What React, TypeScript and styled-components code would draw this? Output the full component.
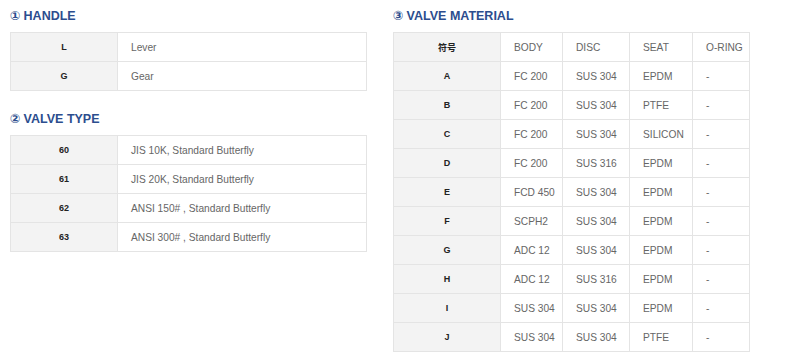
import React from "react";
import styled, { createGlobalStyle } from "styled-components";

const Global = createGlobalStyle`
  html, body { margin: 0; padding: 0; background: #ffffff; }
  body { font-family: "Liberation Sans", Arial, "Noto Sans CJK KR", sans-serif; }
`;

const Page = styled.div`
  display: flex;
  align-items: flex-start;
  gap: 26px;
  padding-left: 10px;
  width: 800px;
  height: 355px;
  overflow: hidden;
  box-sizing: border-box;
`;

const Column = styled.div<{ $w: number }>`
  width: ${(p) => p.$w}px;
  flex: none;
  display: flex;
  flex-direction: column;
`;

const Heading = styled.h2<{ $mt?: number }>`
  margin: ${(p) => p.$mt ?? 0}px 0 0 0;
  height: 32px;
  line-height: 32px;
  font-size: 12.5px;
  font-weight: bold;
  color: #2c4d8e;
  white-space: nowrap;
`;

const Circle = styled.span`
  font-family: "DejaVu Sans", sans-serif;
  font-weight: bold;
  font-size: 12.5px;
  margin-right: 3px;
`;

const Table = styled.table`
  border-collapse: collapse;
  table-layout: fixed;
  width: 100%;
`;

const Cell = styled.td`
  border: 1px solid #e4e4e4;
  height: 28px;
  padding: 0 0 0 13px;
  font-size: 10.2px;
  color: #666666;
  white-space: nowrap;
  overflow: hidden;
`;

const KeyCell = styled.td`
  border: 1px solid #e4e4e4;
  background: #f3f3f3;
  height: 28px;
  padding: 0;
  text-align: center;
  font-size: 9px;
  font-weight: bold;
  color: #222222;
`;

const handle = [
  ["L", "Lever"],
  ["G", "Gear"],
];

const types = [
  ["60", "JIS 10K, Standard Butterfly"],
  ["61", "JIS 20K, Standard Butterfly"],
  ["62", "ANSI 150# , Standard Butterfly"],
  ["63", "ANSI 300# , Standard Butterfly"],
];

const materials = [
  ["A", "FC 200", "SUS 304", "EPDM", "-"],
  ["B", "FC 200", "SUS 304", "PTFE", "-"],
  ["C", "FC 200", "SUS 304", "SILICON", "-"],
  ["D", "FC 200", "SUS 316", "EPDM", "-"],
  ["E", "FCD 450", "SUS 304", "EPDM", "-"],
  ["F", "SCPH2", "SUS 304", "EPDM", "-"],
  ["G", "ADC 12", "SUS 304", "EPDM", "-"],
  ["H", "ADC 12", "SUS 316", "EPDM", "-"],
  ["I", "SUS 304", "SUS 304", "EPDM", "-"],
  ["J", "SUS 304", "SUS 304", "PTFE", "-"],
];

const colW = [107, 62, 67, 63, 57];

export default function App() {
  return (
    <>
      <Global />
      <Page>
        <Column $w={357}>
          <Heading>
            <Circle>①</Circle>HANDLE
          </Heading>
          <Table>
            <colgroup>
              <col style={{ width: 107 }} />
              <col />
            </colgroup>
            <tbody>
              {handle.map(([k, v]) => (
                <tr key={k}>
                  <KeyCell>{k}</KeyCell>
                  <Cell>{v}</Cell>
                </tr>
              ))}
            </tbody>
          </Table>
          <Heading $mt={12}>
            <Circle>②</Circle>VALVE TYPE
          </Heading>
          <Table>
            <colgroup>
              <col style={{ width: 107 }} />
              <col />
            </colgroup>
            <tbody>
              {types.map(([k, v]) => (
                <tr key={k}>
                  <KeyCell>{k}</KeyCell>
                  <Cell>{v}</Cell>
                </tr>
              ))}
            </tbody>
          </Table>
        </Column>
        <Column $w={356}>
          <Heading>
            <Circle>③</Circle>VALVE MATERIAL
          </Heading>
          <Table>
            <colgroup>
              {colW.map((w, i) => (
                <col key={i} style={{ width: w }} />
              ))}
            </colgroup>
            <tbody>
              <tr>
                <KeyCell>符号</KeyCell>
                <Cell>BODY</Cell>
                <Cell>DISC</Cell>
                <Cell>SEAT</Cell>
                <Cell>O-RING</Cell>
              </tr>
              {materials.map((row) => (
                <tr key={row[0]}>
                  <KeyCell>{row[0]}</KeyCell>
                  {row.slice(1).map((c, i) => (
                    <Cell key={i}>{c}</Cell>
                  ))}
                </tr>
              ))}
            </tbody>
          </Table>
        </Column>
      </Page>
    </>
  );
}
